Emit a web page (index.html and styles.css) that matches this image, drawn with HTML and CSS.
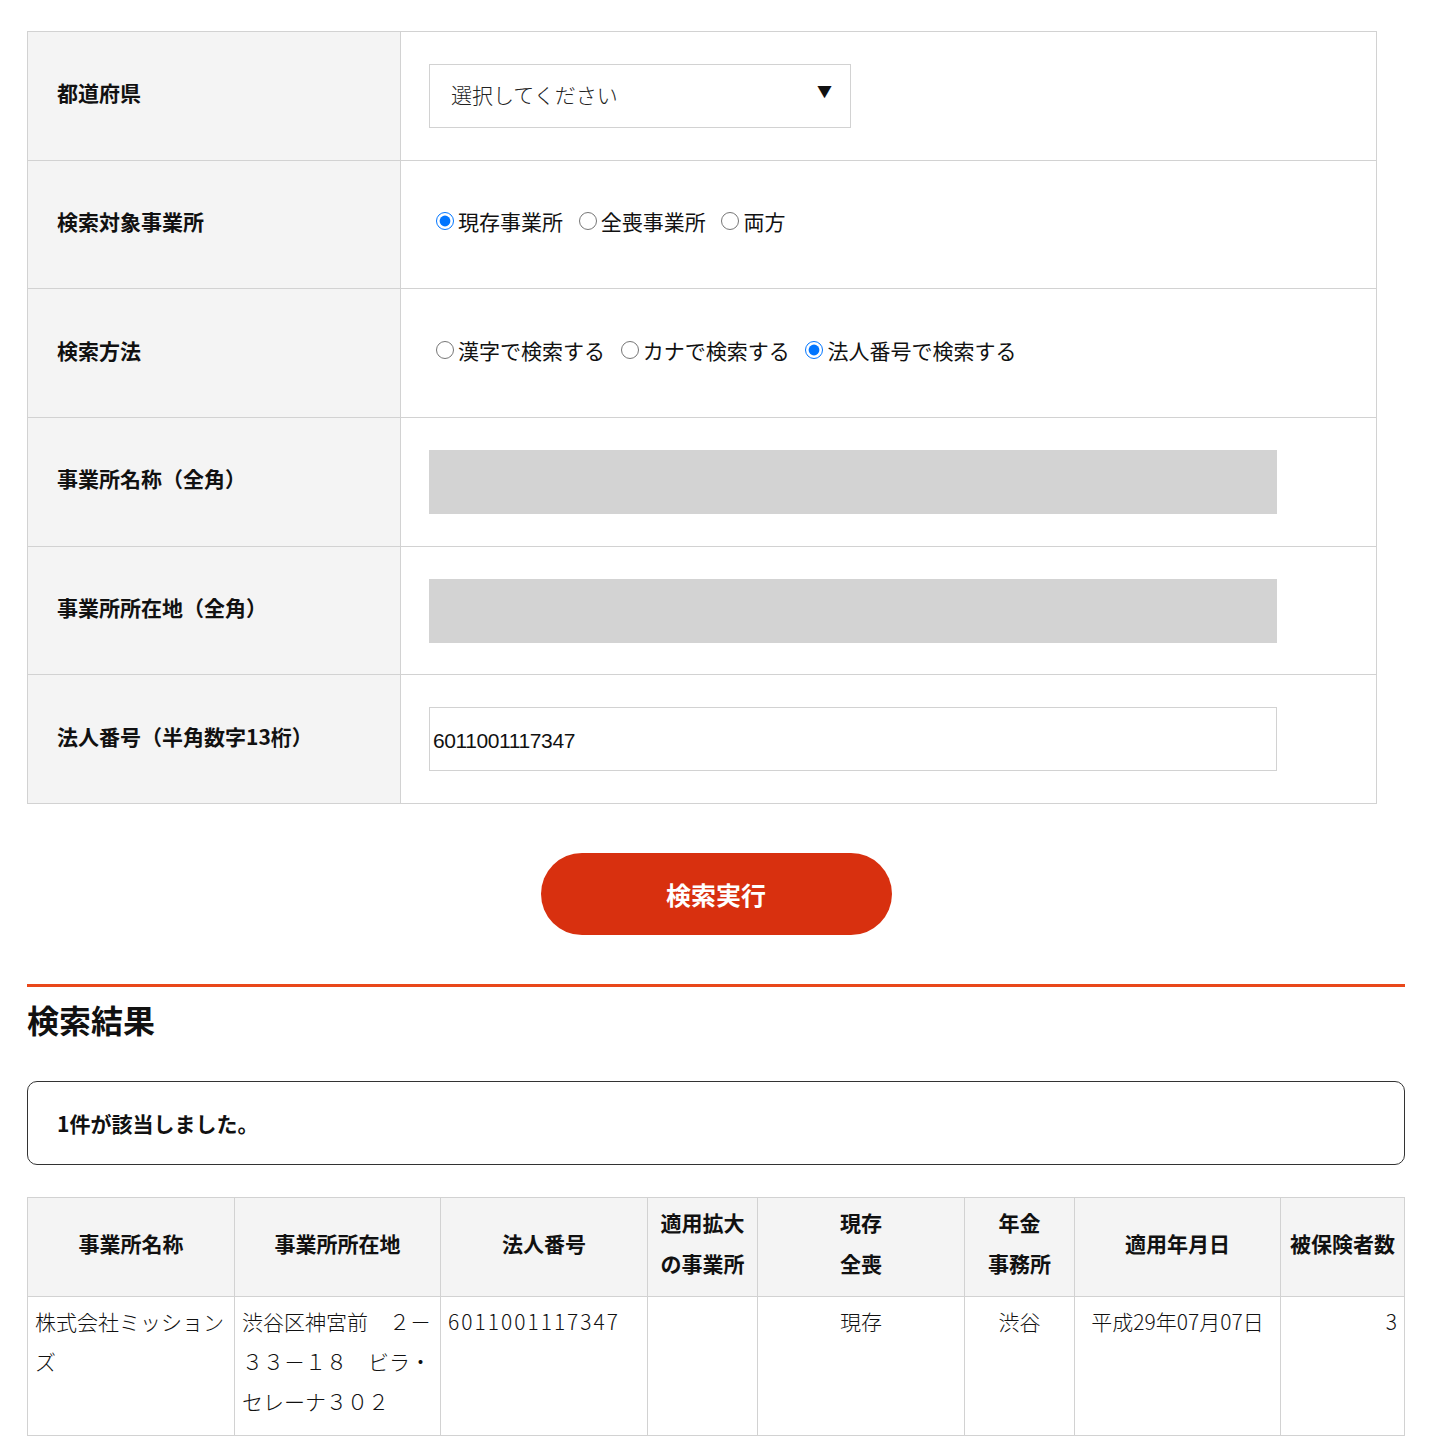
FILE: index.html
```html
<!DOCTYPE html>
<html lang="ja">
<head>
    <meta charset="UTF-8">
    <title>適用事業所検索</title>
    <link rel="stylesheet" href="styles.css">
</head>
<body>
    <div class="page">
        <form class="search-form" onsubmit="return false;">
            <table class="form-table">
                <tr>
                    <th>都道府県</th>
                    <td>
                        <span class="select-wrap">
                            <select class="pref">
                                <option>選択してください</option>
                            </select>
                        </span>
                    </td>
                </tr>
                <tr>
                    <th>検索対象事業所</th>
                    <td class="radios">
                        <label class="radio"><input type="radio" name="target" checked>現存事業所</label>
                        <label class="radio"><input type="radio" name="target">全喪事業所</label>
                        <label class="radio"><input type="radio" name="target">両方</label>
                    </td>
                </tr>
                <tr>
                    <th>検索方法</th>
                    <td class="radios">
                        <label class="radio"><input type="radio" name="method">漢字で検索する</label>
                        <label class="radio"><input type="radio" name="method">カナで検索する</label>
                        <label class="radio"><input type="radio" name="method" checked>法人番号で検索する</label>
                    </td>
                </tr>
                <tr>
                    <th>事業所名称（全角）</th>
                    <td><input type="text" class="field" disabled></td>
                </tr>
                <tr>
                    <th>事業所所在地（全角）</th>
                    <td><input type="text" class="field" disabled></td>
                </tr>
                <tr>
                    <th>法人番号（半角数字13桁）</th>
                    <td><input type="text" class="field number" value="6011001117347"></td>
                </tr>
            </table>

            <div class="submit-row">
                <button type="submit" class="submit">検索実行</button>
            </div>
        </form>

        <section class="results">
            <h2>検索結果</h2>
            <div class="result-count">1件が該当しました。</div>

            <table class="result-table">
                <colgroup>
                    <col style="width: 207px">
                    <col style="width: 206px">
                    <col style="width: 207px">
                    <col style="width: 110px">
                    <col style="width: 207px">
                    <col style="width: 110px">
                    <col style="width: 206px">
                    <col>
                </colgroup>
                <thead>
                    <tr>
                        <th>事業所名称</th>
                        <th>事業所所在地</th>
                        <th>法人番号</th>
                        <th>適用拡大<br>の事業所</th>
                        <th>現存<br>全喪</th>
                        <th>年金<br>事務所</th>
                        <th>適用年月日</th>
                        <th>被保険者数</th>
                    </tr>
                </thead>
                <tbody>
                    <tr>
                        <td>株式会社ミッションズ</td>
                        <td>渋谷区神宮前　２－３３－１８　ビラ・セレーナ３０２</td>
                        <td class="corp-no">6011001117347</td>
                        <td></td>
                        <td class="center">現存</td>
                        <td class="center">渋谷</td>
                        <td class="center">平成29年07月07日</td>
                        <td class="right">3</td>
                    </tr>
                </tbody>
            </table>
        </section>
    </div>
</body>
</html>
```

FILE: styles.css
```css
body {
    margin: 0;
    background: #fff;
    color: #111;
    font-family: "Noto Sans CJK JP", "Noto Sans", sans-serif;
    font-size: 21px;
}

.page {
    width: 1378px;
    padding: 31px 0 40px 27px;
}

/* search form */
.form-table {
    width: 1350px;
    border-collapse: collapse;
    border: 1px solid #d2d2d2;
}

.form-table th,
.form-table td {
    height: 128.7px;
    box-sizing: border-box;
    border: 1px solid #d2d2d2;
    padding: 0 28px;
    vertical-align: middle;
}

.form-table th {
    width: 373px;
    background-color: #f4f4f4;
    text-align: left;
    font-weight: bold;
    padding-left: 29px;
    padding-bottom: 7px;
}

.form-table td.radios {
    padding-bottom: 7px;
}

.select-wrap {
    position: relative;
    display: inline-block;
}

.select-wrap::after {
    content: "▼";
    position: absolute;
    right: 19px;
    top: 16px;
    font-size: 15px;
    color: #111;
    pointer-events: none;
}

.pref {
    appearance: none;
    -webkit-appearance: none;
    width: 422px;
    height: 64px;
    box-sizing: border-box;
    padding: 0 40px 4px 21px;
    border: 1px solid #d2d2d2;
    border-radius: 0;
    background: #fff;
    color: #222;
    font-family: inherit;
    font-size: 21px;
    font-weight: 300;
}

.radio {
    display: inline-flex;
    align-items: center;
}

.radio input {
    width: 18px;
    height: 18px;
    margin: 0 4px 0 11px;
}

.radio:first-child input {
    margin-left: 7px;
}

.field {
    display: block;
    width: 848px;
    height: 64px;
    box-sizing: border-box;
    border: 1px solid #d2d2d2;
    padding: 0 4px 0 3px;
    font-size: 21px;
    color: #111;
    background: #fff;
}

.field:disabled {
    background-color: #d3d3d3;
    border-color: #d3d3d3;
}

.field.number {
    font-family: "Liberation Sans", Arial, sans-serif;
    letter-spacing: -0.4px;
    padding-top: 4px;
}

.submit-row {
    display: flex;
    justify-content: center;
    width: 1378px;
    margin: 49px 0;
}

.submit {
    width: 351px;
    height: 82px;
    border: 0;
    border-radius: 41px;
    background-color: #d8300f;
    color: #fff;
    font-family: inherit;
    font-size: 25px;
    font-weight: bold;
    cursor: pointer;
}

/* results */
.results h2 {
    margin: 0;
    padding-top: 8px;
    border-top: 3px solid #e9471a;
    font-size: 32px;
    line-height: 48px;
    font-weight: bold;
}

.result-count {
    margin: 38px 0 32px;
    padding: 0 29px;
    height: 84px;
    box-sizing: border-box;
    display: flex;
    align-items: center;
    border: 1px solid #333;
    border-radius: 10px;
    font-weight: bold;
}

.result-table {
    width: 1378px;
    border-collapse: collapse;
    table-layout: fixed;
    border: 1px solid #d2d2d2;
}

.result-table th,
.result-table td {
    border: 1px solid #d2d2d2;
    padding: 0 7px;
    line-height: 40px;
}

.result-table th {
    height: 99px;
    box-sizing: border-box;
    padding-bottom: 8px;
    background-color: #f4f4f4;
    font-weight: bold;
    text-align: center;
    line-height: 41px;
}

.result-table td {
    height: 139px;
    box-sizing: border-box;
    vertical-align: top;
    padding-top: 4px;
    padding-bottom: 14px;
    font-weight: 300;
}

.result-table .corp-no {
    letter-spacing: 2px;
}

.result-table .center {
    text-align: center;
}

.result-table .right {
    text-align: right;
}
```
